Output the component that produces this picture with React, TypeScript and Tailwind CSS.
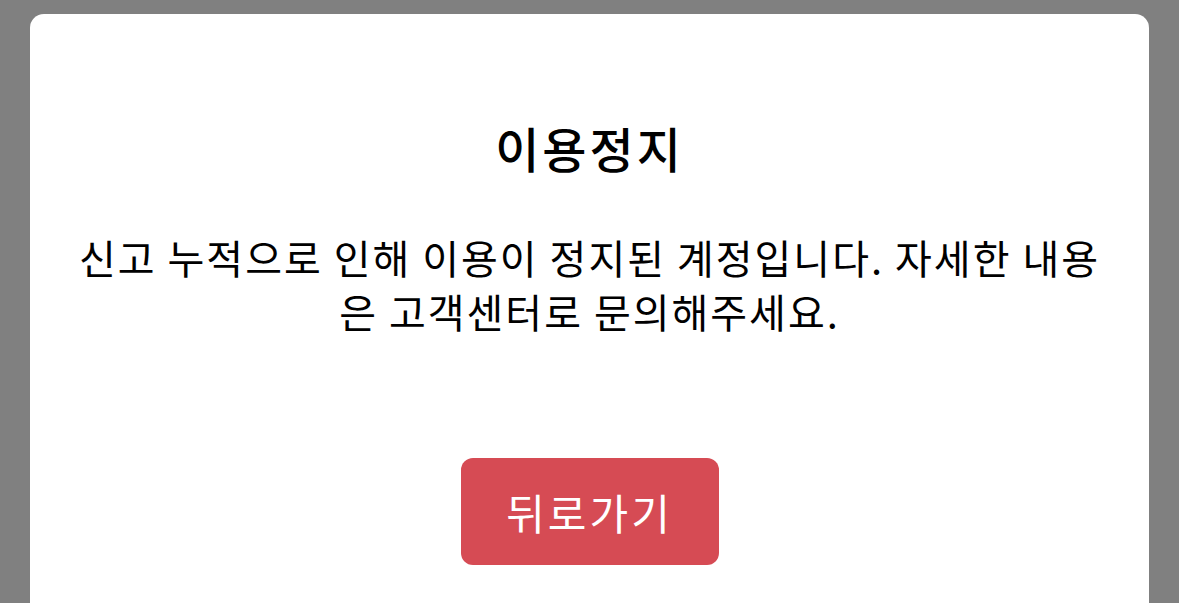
import React from 'react';

const font = { fontFamily: '"Noto Sans CJK KR", "Noto Sans", sans-serif' };

export default function App() {
  return (
    <div className="h-screen overflow-hidden bg-[#808080] px-[30px] pt-[14px]" style={font}>
      <div className="flex h-[620px] flex-col items-center rounded-[14px] bg-white px-[40px] pt-[103px]">
        <h1 className="text-[48px] font-medium leading-[60px] tracking-[3px] text-black">이용정지</h1>
        <p className="mt-[53px] text-center text-[40px] leading-[54px] tracking-[2px] text-black">
          신고 누적으로 인해 이용이 정지된 계정입니다. 자세한 내용은 고객센터로 문의해주세요.
        </p>
        <button className="mt-[120px] flex h-[107px] w-[258px] items-center justify-center rounded-[12px] bg-[#d64b54] text-[42px] tracking-[3px] text-white">
          뒤로가기
        </button>
      </div>
    </div>
  );
}
